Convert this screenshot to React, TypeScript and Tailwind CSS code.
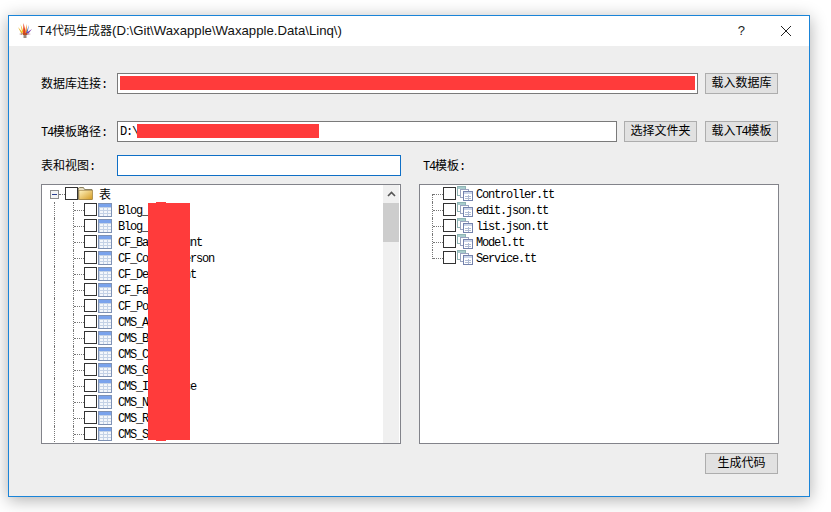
const cjk = '"Liberation Mono", "Noto Sans CJK SC", monospace'

function Latin({ children }: { children: string }) {
  return <span className="text-[12px] tracking-[-1.2px]">{children}</span>
}

function Logo() {
  return (
    <svg width="16" height="16" viewBox="0 0 16 16" className="shrink-0">
      <path d="M1 4l5 6-1 2z" fill="#e8b020" />
      <path d="M3.500 1L7 10 5 9z" fill="#f0c020" />
      <path d="M6.500 0L9 10H6z" fill="#e8401c" />
      <path d="M9.500 1L8 10h2z" fill="#f08020" />
      <path d="M12 2L9 10l1.500 0z" fill="#3f6fd0" />
      <path d="M15 6l-6 4 2 1z" fill="#7a3fa8" />
      <path d="M2 11l4-1-1 2z" fill="#b08a90" />
      <path d="M14 11l-5-1 1 2z" fill="#b08a90" />
      <rect x="6" y="10" width="4" height="2" fill="#c04a20" />
      <rect x="6.500" y="12" width="3" height="3" fill="#9a8a80" />
    </svg>
  )
}

function Folder() {
  return (
    <svg width="15" height="13" viewBox="0 0 15 13" className="shrink-0 mb-[1px]">
      <defs>
        <linearGradient id="fold" x1="0" y1="0" x2="1" y2="1">
          <stop offset="0" stopColor="#fff3c0" />
          <stop offset="1" stopColor="#d49a20" />
        </linearGradient>
      </defs>
      <path d="M0.5 2.5V1l1-.5h4l1 2h7.500v10h-13.500z" fill="#e8dfc0" stroke="#8a8060" />
      <rect x="1" y="3.500" width="13.500" height="9" fill="url(#fold)" stroke="#a08040" strokeWidth="0.6" />
    </svg>
  )
}

function TableIcon() {
  return (
    <svg width="14" height="14" viewBox="0 0 14 14" className="shrink-0 mb-[1px]" shapeRendering="crispEdges">
      <rect x="0" y="0" width="14" height="14" fill="#7f92b4" />
      <rect x="1" y="1" width="12" height="3" fill="#7aa3ec" />
      <rect x="1" y="4" width="12" height="9" fill="#c4d2e6" />
      {[2, 6, 10].map(x =>
        [5, 8, 11].map(y => <rect key={`${x}-${y}`} x={x} y={y} width="3" height="2" fill="#f4f7fb" />)
      )}
    </svg>
  )
}

function TemplateIcon() {
  return (
    <svg width="16" height="15" viewBox="0 0 16 15" className="shrink-0 mb-[1px]" shapeRendering="crispEdges">
      <rect x="0.500" y="0.500" width="8" height="9" fill="#fff" stroke="#8fb4b4" />
      <rect x="1" y="1" width="7" height="2" fill="#a8cccc" />
      <rect x="3.500" y="3.500" width="8" height="8" fill="#fff" stroke="#9aa4c0" />
      <rect x="6.500" y="5.500" width="9" height="9" fill="#fff" stroke="#7482ac" />
      <rect x="7" y="6" width="8" height="2" fill="#ccd6ea" />
      <path d="M8 10h6M8 12h6M11 9v5" stroke="#b0bcd4" fill="none" />
    </svg>
  )
}

function Check() {
  return <span className="w-[13px] h-[13px] mb-[1px] shrink-0 border border-[#333] bg-white" />
}

function Btn({ children }: { children: React.ReactNode }) {
  return (
    <button className="w-[73px] h-[21px] shrink-0 flex items-center justify-center border border-[#adadad] bg-[#e1e1e1] text-[12px] text-black">
      <span className="mt-[1px]">{children}</span>
    </button>
  )
}

const tables = [
  'Blog_', 'Blog_', 'CF_BaseAccount', 'CF_ContactPerson', 'CF_Department', 'CF_Fa', 'CF_Po',
  'CMS_A', 'CMS_B', 'CMS_C', 'CMS_G', 'CMS_Interface', 'CMS_N', 'CMS_R', 'CMS_S',
]

const templates = ['Controller.tt', 'edit.json.tt', 'list.json.tt', 'Model.tt', 'Service.tt']

export default function App() {
  return (
    <div className="w-[831px] h-[512px] bg-white overflow-hidden pt-[15px] pl-[8px]" style={{ fontFamily: cjk }}>
      <div className="w-[802px] h-[482px] border border-[#1a84d8] bg-[#eeeeee] flex flex-col shadow-[0_3px_16px_rgba(0,0,0,0.32)]">
        {/* title bar */}
        <div className="h-[30px] bg-white flex items-center pl-[8px] shrink-0">
          <Logo />
          <span
            className="ml-[5px] text-[12px] text-[#111] flex-1"
            style={{ fontFamily: '"Liberation Sans", "Noto Sans CJK SC", sans-serif' }}
          >
            T4代码生成器<span className="text-[13.2px]">(D:\Git\Waxapple\Waxapple.Data\Linq\)</span>
          </span>
          <span className="text-[13px] text-[#222] mr-[35px]" style={{ fontFamily: '"Liberation Sans", sans-serif' }}>?</span>
          <svg width="12" height="12" viewBox="0 0 12 12" className="mr-[17px]">
            <path d="M1 1l10 10M11 1L1 11" stroke="#222" strokeWidth="1" fill="none" />
          </svg>
        </div>

        <div className="flex-1 pl-[32px] pr-[30px] pt-[27px] flex flex-col text-[12px] text-black">
          {/* connection row */}
          <div className="flex items-center h-[21px]">
            <span className="w-[76px] shrink-0 mt-[2px]">数据库连接:</span>
            <div className="w-[581px] h-[21px] shrink-0 border border-[#7a7a7a] bg-white p-[1px] pr-[2px]">
              <div className="h-[14px] mt-[1px] ml-[1px] bg-[#ff3b3b]" />
            </div>
            <span className="w-[7px] shrink-0" />
            <Btn>载入数据库</Btn>
          </div>

          {/* template path row */}
          <div className="flex items-center h-[21px] mt-[27px]">
            <span className="w-[76px] shrink-0 mt-[2px]"><Latin>T4</Latin>模板路径:</span>
            <div className="relative w-[500px] h-[21px] shrink-0 border border-[#7a7a7a] bg-white flex items-center pl-[2px]">
              <Latin>D:\</Latin>
              <div className="absolute left-[19px] top-[2px] w-[182px] h-[14px] bg-[#ff3b3b]" />
            </div>
            <span className="w-[7px] shrink-0" />
            <Btn>选择文件夹</Btn>
            <span className="w-[8px] shrink-0" />
            <Btn>载入<Latin>T4</Latin>模板</Btn>
          </div>

          {/* filter row */}
          <div className="flex items-center h-[21px] mt-[13px]">
            <span className="w-[76px] shrink-0 mt-[2px]">表和视图:</span>
            <div className="w-[284px] h-[21px] shrink-0 border border-[#0f6fc6] bg-white" />
            <span className="ml-[22px] mt-[2px]"><Latin>T4</Latin>模板:</span>
          </div>

          {/* trees */}
          <div className="flex mt-[8px] gap-[18px]">
            <div className="relative w-[360px] h-[260px] border border-[#82838a] bg-white overflow-hidden flex">
              <div className="flex-1 pt-[1px]">
                <div className="flex items-center h-4">
                  <span className="ml-[8px] w-[9px] h-[9px] shrink-0 border border-[#8c8c8c] bg-[#f4f4f4] flex items-center justify-center">
                    <span className="w-[5px] h-[1px] bg-[#2a3f8f]" />
                  </span>
                  <span className="w-[6px] shrink-0 border-t border-dotted border-[#777]" />
                  <Check />
                  <Folder />
                  <span className="ml-[6px] mt-[4px]">表</span>
                </div>
                {tables.map((name, i) => (
                  <div key={i} className="flex items-center h-4">
                    <span className="ml-[12px] w-[19px] h-4 shrink-0 border-l border-dotted border-[#777]" />
                    <span className="w-[11px] h-4 shrink-0 border-l border-dotted border-[#777] relative">
                      <span className="absolute left-0 top-[8px] w-[10px] border-t border-dotted border-[#777]" />
                    </span>
                    <Check />
                    <span className="w-[1px] shrink-0" />
                    <TableIcon />
                    <span className="ml-[6px] mt-[2px]"><Latin>{name}</Latin></span>
                  </div>
                ))}
              </div>
              {/* scrollbar */}
              <div className="w-[16px] mr-[1px] bg-[#f0f0f0] shrink-0 flex flex-col">
                <div className="h-[18px] flex items-center justify-center shrink-0">
                  <svg width="9" height="6" viewBox="0 0 9 6">
                    <path d="M1 5l3.500-3.500L8 5" stroke="#555" strokeWidth="1.600" fill="none" />
                  </svg>
                </div>
                <div className="h-[39px] bg-[#cdcdcd]" />
              </div>
              {/* redaction */}
              <div className="absolute left-[106px] top-[18px] w-[42px] h-[237px] bg-[#ff3b3b]" />
              <div className="absolute left-[114px] top-[17px] w-[10px] h-[2px] bg-[#ff3b3b]" />
              <div className="absolute left-[114px] top-[254px] w-[10px] h-[2px] bg-[#ff3b3b]" />
            </div>

            <div className="w-[360px] h-[260px] border border-[#82838a] bg-white pt-[1px] overflow-hidden">
              {templates.map((name, i) => (
                <div key={name} className="flex items-center h-4">
                  {i === 0 ? (
                    <span className="ml-[12px] w-[11px] h-[8px] self-end shrink-0 relative border-l border-dotted border-[#777]">
                      <span className="absolute left-0 top-0 w-[10px] border-t border-dotted border-[#777]" />
                    </span>
                  ) : (
                    <span
                      className={`ml-[12px] w-[11px] shrink-0 relative border-l border-dotted border-[#777] ${i === templates.length - 1 ? 'h-[9px] self-start' : 'h-4'}`}
                    >
                      <span className="absolute left-0 top-[8px] w-[10px] border-t border-dotted border-[#777]" />
                    </span>
                  )}
                  <Check />
                  <span className="w-[1px] shrink-0" />
                  <TemplateIcon />
                  <span className="ml-[3px] mt-[2px]"><Latin>{name}</Latin></span>
                </div>
              ))}
            </div>
          </div>

          {/* footer */}
          <div className="flex justify-end mt-[9px] pr-[1px]">
            <Btn>生成代码</Btn>
          </div>
        </div>
      </div>
    </div>
  )
}
